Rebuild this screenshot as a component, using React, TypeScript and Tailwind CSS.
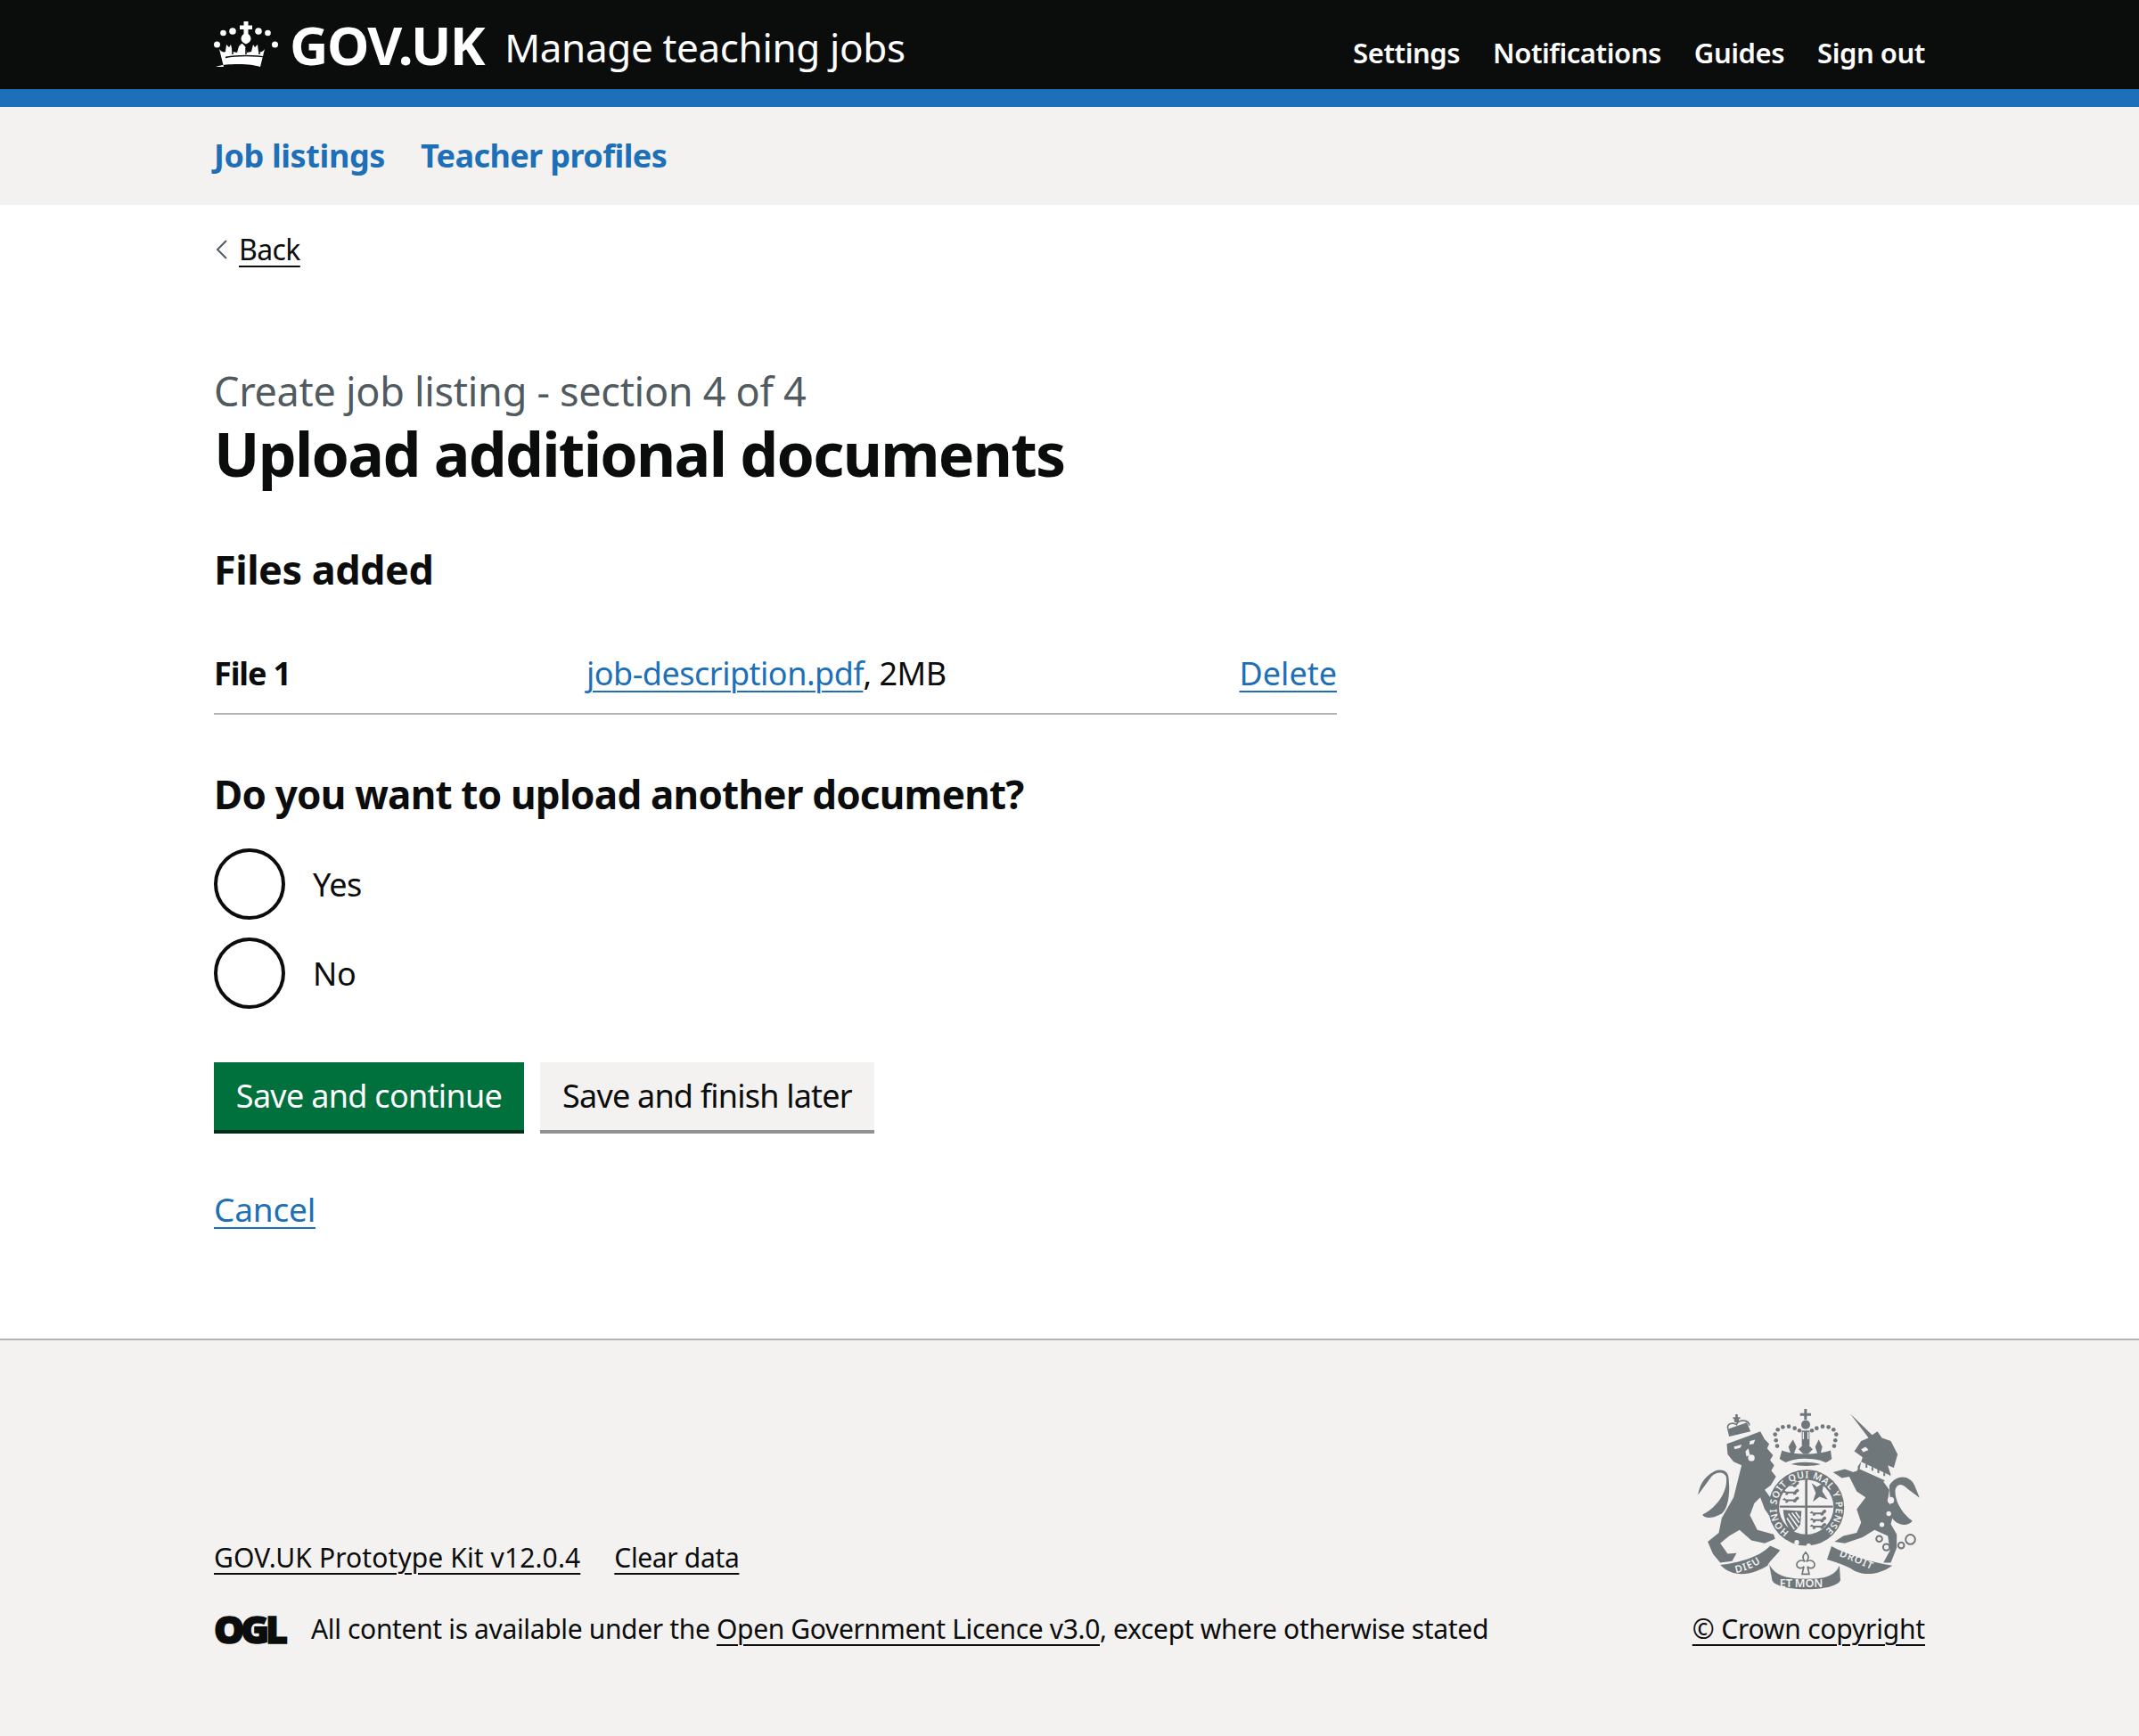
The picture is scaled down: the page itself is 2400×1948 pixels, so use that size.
const font = { fontFamily: '"Noto Sans", Arial, sans-serif' };

const linkLine = "underline decoration-[2px] underline-offset-[6px]";

function Crown() {
  return (
    <svg viewBox="0 0 72 52" className="h-[52px] w-[72px] shrink-0" fill="#fff">
      <path d="M33.500 0h5v4.500h4.500v4.500h-4.500v5c2 1.500 3 3.500 3 5.500 0 2.500-2 4.500-5.500 6-3.500-1.500-5.500-3.500-5.500-6 0-2 1-4 3-5.500V9H29V4.500h4.500z" />
      <circle cx="10.500" cy="13" r="3.300" /><circle cx="21" cy="11" r="3.800" /><circle cx="50" cy="11" r="3.800" /><circle cx="60.500" cy="13" r="3.300" />
      <circle cx="3.500" cy="26" r="3.500" /><circle cx="68.500" cy="26" r="3.500" />
      <path d="M11 51 6 31c2 3 5 4 7 3l1-8 3 3 2-3 2 8 5 1 2-7 3-3h1l3 3 2 7 5-1 2-8 2 3 3-3 1 8c2 1 5 0 7-3l-5 20c-7-2-12-3-25-3s-18 1-25 3z" />
      <path d="M13 40.500c6-1.500 14-2 23-2s17 .5 23 2M21 31v6M36 30v7M51 31v6" stroke="#0b0c0c" strokeWidth="1.500" fill="none" />
    </svg>
  );
}

function Lion({ x, y }: { x: number; y: number }) {
  return <path transform={`translate(${x} ${y})`} d="M-32-3l7-6 5 5h27l6-7 6-3 5 5-3 6-5 2-3 7H5l-2-4H-12l-3 5h-8l2-7-8-1z" />;
}

function Crest() {
  const grey = "#6f777b";
  const bg = "#f3f2f1";
  const crestFont = "Noto Sans, sans-serif";
  return (
    <svg viewBox="60 60 780 640" className="h-[213px] w-[260px]">
      {/* lion */}
      <g fill={grey}>
        <path d="M172 190 205 178 240 165 285 148 300 175 315 190 308 205 328 228 318 245 332 262 322 280 338 300 320 330 300 345 340 400 345 430 325 445 300 410 285 370 265 390 250 430 275 480 330 495 335 510 300 525 255 515 215 480 180 500 150 525 175 560 205 558 190 585 150 590 125 560 108 520 145 490 155 440 195 370 215 290 222 262 195 250 175 225Z" />
        <path d="M155 425C120 445 95 440 90 428 130 410 178 355 170 300 160 280 135 285 120 300L75 362C80 330 95 300 130 282 160 270 178 285 178 305 185 360 175 410 155 425Z" />
        <path d="M180 165 174 140 240 118 252 148Z" />
        <circle cx="205" cy="110" r="8" /><path d="M201 90h8v12h-8zM193 100h24v6h-24z" />
      </g>
      <g fill="none" stroke={grey} strokeWidth="5">
        <path d="M176 140C170 118 195 118 205 125 210 105 250 108 248 128" />
      </g>
      <g fill={bg}>
        <path d="M195 200 222 192 218 203 200 208ZM250 180 268 176 262 190 248 192Z" />
        <circle cx="255" cy="237" r="11" />
        <path d="M235 215 245 205 250 228 238 232Z" />
      </g>
      {/* unicorn */}
      <g fill={grey}>
        <path d="M588 88 662 160 680 148 695 170 725 180 748 225 735 270 715 262 725 295 700 318 720 345 715 380 735 420 725 460 745 495 745 540 725 590 700 590 722 550 715 500 670 480 630 505 570 525 535 520 565 500 610 490 625 455 610 410 640 370 610 350 585 300 560 305 530 285 570 275 600 285 625 250 630 235 602 215 625 180 650 170Z" />
        <path d="M720 330C745 290 790 295 805 330L822 372 780 340C760 320 745 325 740 345 738 390 770 430 798 450 770 480 730 450 725 430Z" />
      </g>
      <g fill={bg}>
        <path d="M625 250 722 296 715 318 620 275Z" />
        <path d="M625 208 640 200 650 210 632 218Z" />
        <circle cx="603" cy="272" r="11" /><circle cx="592" cy="355" r="12" /><circle cx="725" cy="380" r="11" /><circle cx="718" cy="425" r="8" /><circle cx="695" cy="462" r="8" />
      </g>
      <g fill={grey}>
        <path d="M640 258h6v12h-6zM660 268h6v12h-6zM680 276h6v12h-6zM700 286h6v12h-6z" />
      </g>
      <g fill="none" stroke={grey} strokeWidth="6">
        <circle cx="686" cy="510" r="10" /><circle cx="710" cy="538" r="11" /><circle cx="760" cy="532" r="10" /><circle cx="791" cy="512" r="16" />
      </g>
      {/* crown */}
      <g fill={grey}>
        <path d="M433 72h9v14h14v9h-14v14h-9V95h-14v-9h14z" />
        <circle cx="438" cy="125" r="15" />
        <path d="M425 145h26v50h-26z" />
        {[[338, 178], [335, 158], [344, 142], [361, 133], [381, 131], [401, 137], [417, 145], [538, 178], [541, 158], [532, 142], [515, 133], [495, 131], [475, 137], [459, 145], [342, 197], [534, 197]].map(([cx, cy]) => (
          <circle key={`${cx}-${cy}`} cx={cx} cy={cy} r="7" />
        ))}
        <path d="M395 175 407 200 398 224H388L380 200ZM482 175 494 200 488 224H478L470 200ZM438 185 462 208 446 224H430L414 208Z" />
        <path d="M358 212C395 228 480 228 522 212L526 240C490 272 390 272 350 240Z" />
      </g>
      <path d="M430 150v24M446 150v24" stroke={bg} strokeWidth="4" />
      <path d="M366 262C400 240 475 240 510 262" fill="none" stroke={bg} strokeWidth="12" />
      {/* garter and shield */}
      <circle cx="440" cy="405" r="128" fill={grey} />
      <circle cx="440" cy="403" r="92" fill={bg} />
      <path d="M436 310h8v190h-8zM350 398h180v7H350z" fill={grey} />
      <g fill={grey}>
        <Lion x={392} y={330} /><Lion x={392} y={355} /><Lion x={392} y={381} />
        <Lion x={484} y={425} /><Lion x={484} y={448} /><Lion x={484} y={470} />
        <path d="M458 322 476 335 500 320 494 350 512 378 485 368 462 385 472 355Z" />
        <path d="M362 412 424 416 420 460C412 476 398 486 392 488 375 470 365 445 362 412Z" />
      </g>
      <path d="M380 425 412 470M392 422 416 455M404 420 418 440M375 440 400 478" stroke={bg} strokeWidth="5" />
      <defs>
        <path id="garter" d="M383 487A100 100 0 1 1 497 487" />
        <path id="dieu" d="M203 625C240 618 285 600 318 562" />
        <path id="droit" d="M550 568C585 580 630 600 678 622" />
      </defs>
      <text fill={bg} fontSize="32" fontWeight="600" letterSpacing="2" fontFamily={crestFont}>
        <textPath href="#garter">HONI SOIT QUI MAL Y PENSE</textPath>
      </text>
      <circle cx="408" cy="522" r="8" fill={bg} /><circle cx="448" cy="534" r="8" fill={bg} />
      {/* ribbon */}
      <g fill={grey}>
        <path d="M150 598C215 590 285 570 318 533L352 548C330 575 312 590 310 600 270 625 200 650 150 598Z" />
        <path d="M315 595C335 640 390 645 440 645 490 645 535 640 552 600L555 650C540 690 340 690 325 650Z" />
        <path d="M525 535C580 565 660 590 730 600 690 630 630 640 590 610 570 600 545 590 510 580Z" />
      </g>
      <text x="350" y="673" fill={bg} fontSize="38" fontWeight="600" fontFamily={crestFont}>ET MON</text>
      <text fill={bg} fontSize="34" fontWeight="600" fontFamily={crestFont} letterSpacing="3"><textPath href="#dieu">DIEU</textPath></text>
      <text fill={bg} fontSize="34" fontWeight="600" fontFamily={crestFont} letterSpacing="3"><textPath href="#droit">DROIT</textPath></text>
      <path d="M438 555c-14 14-10 24-2 32-16-10-30 0-28 12 2 12 18 12 24 4l-6 26h24l-6-26c6 8 22 8 24-4 2-12-12-22-28-12 8-8 12-18-2-32z" fill={bg} stroke={grey} strokeWidth="5" />
    </svg>
  );
}

function Radio({ label }: { label: string }) {
  return (
    <label className="flex h-20 items-center">
      <span className="h-20 w-20 shrink-0 rounded-full border-4 border-[#0b0c0c] bg-white" />
      <span className="ml-[31px] mt-[2px] text-[36px] tracking-[-0.4px] text-[#0b0c0c]">{label}</span>
    </label>
  );
}

export default function App() {
  return (
    <div style={font} className="flex min-h-[1948px] flex-col bg-white text-[#0b0c0c]">
      <header className="border-b-[20px] border-[#1d70b8] bg-[#0b0c0c] text-white">
        <div className="mx-auto flex h-[100px] w-[1920px] items-center justify-between">
          <div className="flex items-center">
            <Crown />
            <span className="ml-[13px] text-[60px] font-bold leading-none tracking-[-1.5px]">GOV.UK</span>
            <span className="ml-[23px] mt-[6px] text-[44px] leading-none tracking-[-0.35px]">Manage teaching jobs</span>
          </div>
          <nav className="mt-[18px] flex gap-[37px] text-[31px] font-semibold tracking-[-0.45px]">
            <a>Settings</a>
            <a>Notifications</a>
            <a>Guides</a>
            <a>Sign out</a>
          </nav>
        </div>
      </header>

      <div className="h-[110px] bg-[#f3f2f1]">
        <div className="mx-auto flex h-full w-[1920px] items-center gap-[40px] text-[36px] font-bold text-[#1d70b8]">
          <a className="tracking-[-0.4px]">Job listings</a>
          <a className="tracking-[-0.6px]">Teacher profiles</a>
        </div>
      </div>

      <main className="mx-auto w-[1920px] flex-1">
        <a className="mt-[30px] flex h-10 items-center text-[32px] tracking-[-0.6px]">
          <svg viewBox="0 0 14 22" className="ml-[2px] mr-[12px] h-[22px] w-[14px]" fill="none" stroke="#505a5f" strokeWidth="2"><path d="M12 1 2 11l10 10" /></svg>
          <span className={linkLine}>Back</span>
        </a>

        <p className="mt-[109px] text-[45px] leading-[60px] tracking-[-0.3px] text-[#505a5f]">Create job listing - section 4 of 4</p>
        <h1 className="text-[68px] font-bold leading-[80px] tracking-[-1.7px]">Upload additional documents</h1>
        <h2 className="mt-[60px] text-[45px] font-bold leading-[60px] tracking-[-0.5px]">Files added</h2>

        <div className="mt-[40px] grid h-[93px] w-[1260px] grid-cols-[418px_1fr_auto] items-center border-b-2 border-[#b1b4b6] pt-[3px] text-[36px] tracking-[-0.5px]">
          <span className="font-bold tracking-[-1.1px]">File 1</span>
          <span>
            <a className={`text-[#1d70b8] ${linkLine}`}>job-description.pdf</a>, 2MB
          </span>
          <a className={`tracking-[0px] text-[#1d70b8] ${linkLine}`}>Delete</a>
        </div>

        <h2 className="mt-[59px] text-[44px] font-bold leading-[60px] tracking-[-0.8px]">Do you want to upload another document?</h2>

        <div className="mt-[31px] flex flex-col gap-5">
          <Radio label="Yes" />
          <Radio label="No" />
        </div>

        <div className="mt-[60px] flex gap-[18px]">
          <button className="h-20 w-[348px] border-b-4 border-[#002d18] bg-[#00703c] text-[36px] tracking-[-0.7px] text-white">Save and continue</button>
          <button className="h-20 w-[375px] border-b-4 border-[#929191] bg-[#f3f2f1] text-[36px] tracking-[-0.8px]">Save and finish later</button>
        </div>

        <a className={`mt-[60px] block w-fit text-[37px] leading-[50px] tracking-[-0.2px] text-[#1d70b8] ${linkLine}`}>Cancel</a>
      </main>

      <footer className="h-[446px] border-t-2 border-[#b1b4b6] bg-[#f3f2f1]">
        <div className="mx-auto flex h-full w-[1920px] items-end justify-between pb-[100px] text-[30px] leading-[40px] tracking-[-0.35px]">
          <div>
            <div className="flex gap-[38px]">
              <a className={`tracking-[0.1px] ${linkLine}`}>GOV.UK Prototype Kit v12.0.4</a>
              <a className={linkLine}>Clear data</a>
            </div>
            <div className="mt-[40px] flex items-center">
              <span className="w-[82px] text-[43px] font-black leading-[40px] tracking-[-4px] [-webkit-text-stroke:1.5px_#0b0c0c]">OGL</span>
              <span className="ml-[27px]">
                All content is available under the <a className={linkLine}>Open Government Licence v3.0</a>, except where otherwise stated
              </span>
            </div>
          </div>
          <div className="flex flex-col items-end">
            <Crest />
            <a className={`mt-[18px] tracking-[-0.2px] ${linkLine}`}>© Crown copyright</a>
          </div>
        </div>
      </footer>
    </div>
  );
}
